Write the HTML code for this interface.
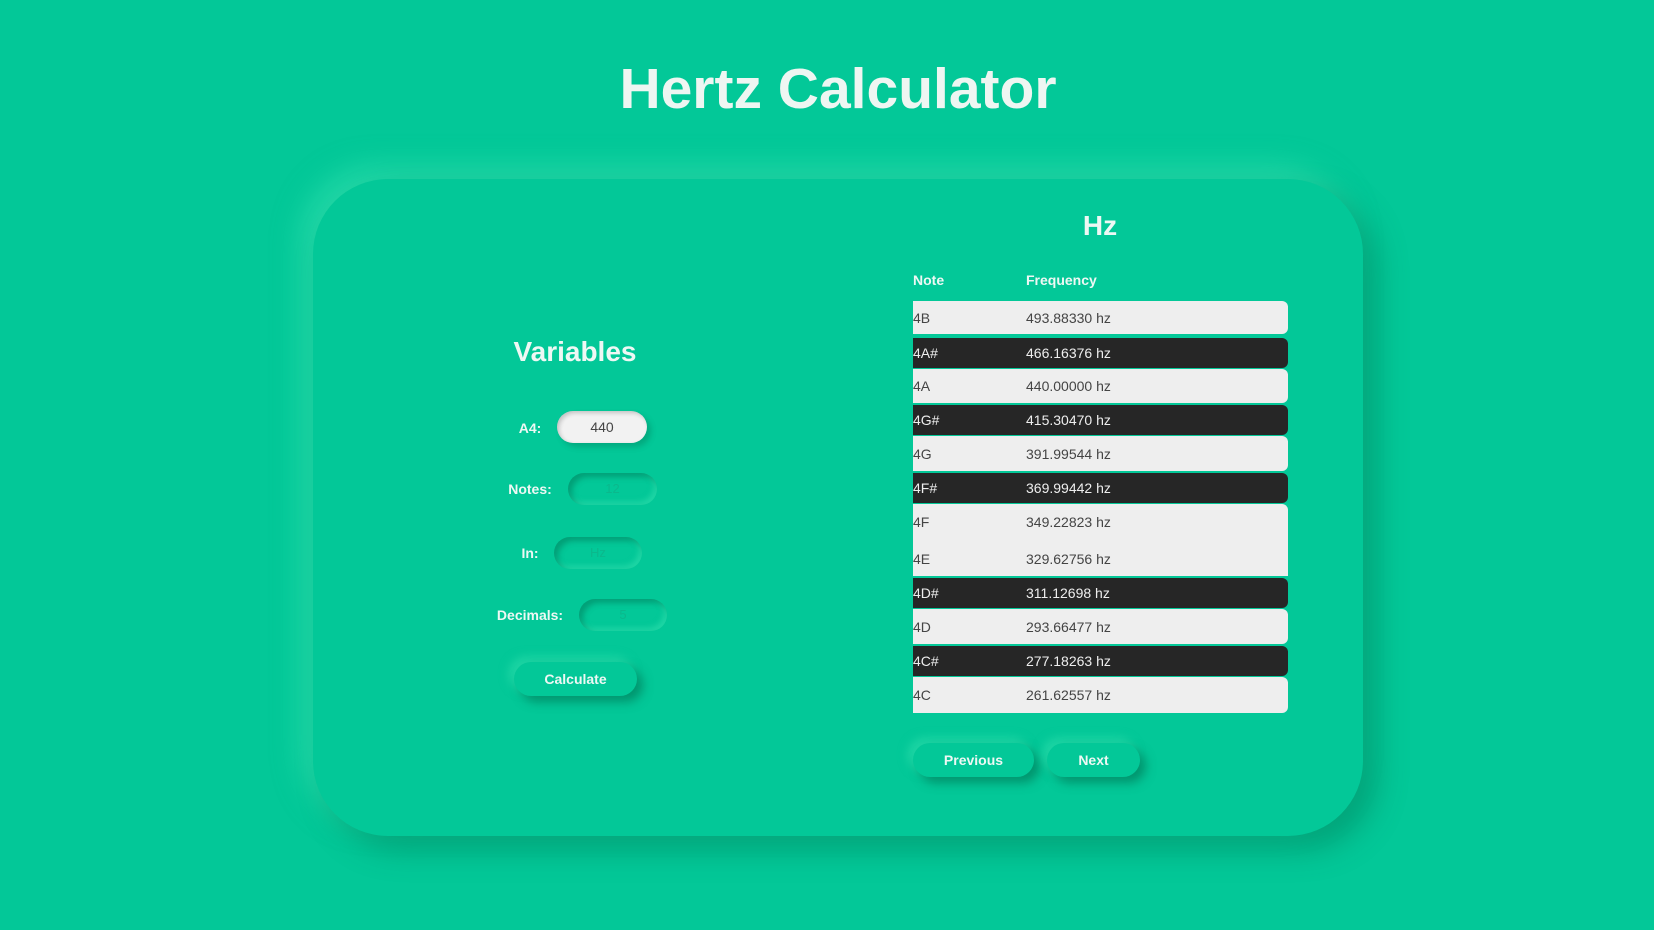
<!DOCTYPE html>
<html><head><style>
*{margin:0;padding:0;box-sizing:border-box}
body{width:1654px;height:930px;background:#03c898;font-family:"Liberation Sans",sans-serif;position:relative;overflow:hidden;color:#eef8f4}
.a{position:absolute}
h1{position:absolute;left:0;width:1676px;top:56px;text-align:center;font-size:57px;font-weight:bold;color:#eef6f2}
.card{left:313px;top:179px;width:1050px;height:657px;border-radius:75px;background:#03c898;box-shadow:14px 14px 30px rgba(0,120,85,.45),-12px -12px 28px rgba(60,230,180,.55)}
.lbl{font-weight:bold;font-size:14px;transform:translate(-50%,-50%)}
.in{border-radius:16px;box-shadow:inset 4px 4px 6px rgba(0,110,80,.45),inset -3px -3px 6px rgba(60,230,180,.5);color:#0bb88c;font-size:13px;text-align:center;line-height:32px}
.btn{border-radius:17px;background:#03c898;box-shadow:6px 6px 10px rgba(0,100,70,.5),-5px -5px 10px rgba(60,230,180,.5);font-weight:bold;font-size:14px;text-align:center;line-height:34px;color:#eef8f4}
.row{left:913px;width:375px;font-size:14px;border-radius:0 6px 6px 0}
.row span{position:absolute;top:50%;transform:translateY(-50%)}
.w{background:#eeeeee;color:#444}
.d{background:#262626;color:#eee}
</style></head><body>
<h1>Hertz Calculator</h1>
<div class="a card"></div>
<div class="a" style="left:1050px;width:100px;top:210px;text-align:center;font-size:28px;font-weight:bold">Hz</div>
<div class="a" style="left:475px;width:200px;top:336px;text-align:center;font-size:28px;font-weight:bold">Variables</div>
<div class="a lbl" style="left:530px;top:428px">A4:</div>
<div class="a" style="left:557px;top:411px;width:90px;height:32px;border-radius:16px;background:#f2f2f2;box-shadow:inset 2px 2px 4px rgba(0,0,0,.2),4px 4px 6px rgba(0,100,70,.3);color:#444;font-size:14px;text-align:center;line-height:32px">440</div>
<div class="a lbl" style="left:530px;top:489px">Notes:</div>
<div class="a in" style="left:568px;top:473px;width:89px;height:32px">12</div>
<div class="a lbl" style="left:530px;top:553px">In:</div>
<div class="a in" style="left:554px;top:537px;width:88px;height:32px">Hz</div>
<div class="a lbl" style="left:530px;top:615px">Decimals:</div>
<div class="a in" style="left:579px;top:599px;width:88px;height:32px">5</div>
<div class="a btn" style="left:514px;top:662px;width:123px;height:34px">Calculate</div>
<div class="a" style="left:913px;top:272px;font-size:14px;font-weight:bold">Note</div>
<div class="a" style="left:1026px;top:272px;font-size:14px;font-weight:bold">Frequency</div>
<div class="a row w" style="top:301px;height:33px"><span style="left:0">4B</span><span style="left:113px">493.88330 hz</span></div>
<div class="a row d" style="top:338px;height:30px"><span style="left:0">4A#</span><span style="left:113px">466.16376 hz</span></div>
<div class="a row w" style="top:369px;height:34px"><span style="left:0">4A</span><span style="left:113px">440.00000 hz</span></div>
<div class="a row d" style="top:405px;height:30px"><span style="left:0">4G#</span><span style="left:113px">415.30470 hz</span></div>
<div class="a row w" style="top:436px;height:35px"><span style="left:0">4G</span><span style="left:113px">391.99544 hz</span></div>
<div class="a row d" style="top:473px;height:30px"><span style="left:0">4F#</span><span style="left:113px">369.99442 hz</span></div>
<div class="a row w" style="top:504px;height:72px;border-radius:0 6px 0 0"><span style="left:0;top:18px">4F</span><span style="left:113px;top:18px">349.22823 hz</span><span style="left:0;top:55px">4E</span><span style="left:113px;top:55px">329.62756 hz</span></div>
<div class="a row d" style="top:578px;height:30px"><span style="left:0">4D#</span><span style="left:113px">311.12698 hz</span></div>
<div class="a row w" style="top:609px;height:35px"><span style="left:0">4D</span><span style="left:113px">293.66477 hz</span></div>
<div class="a row d" style="top:646px;height:30px"><span style="left:0">4C#</span><span style="left:113px">277.18263 hz</span></div>
<div class="a row w" style="top:677px;height:36px"><span style="left:0">4C</span><span style="left:113px">261.62557 hz</span></div>
<div class="a btn" style="left:913px;top:743px;width:121px;height:34px">Previous</div>
<div class="a btn" style="left:1047px;top:743px;width:93px;height:34px">Next</div>
</body></html>
